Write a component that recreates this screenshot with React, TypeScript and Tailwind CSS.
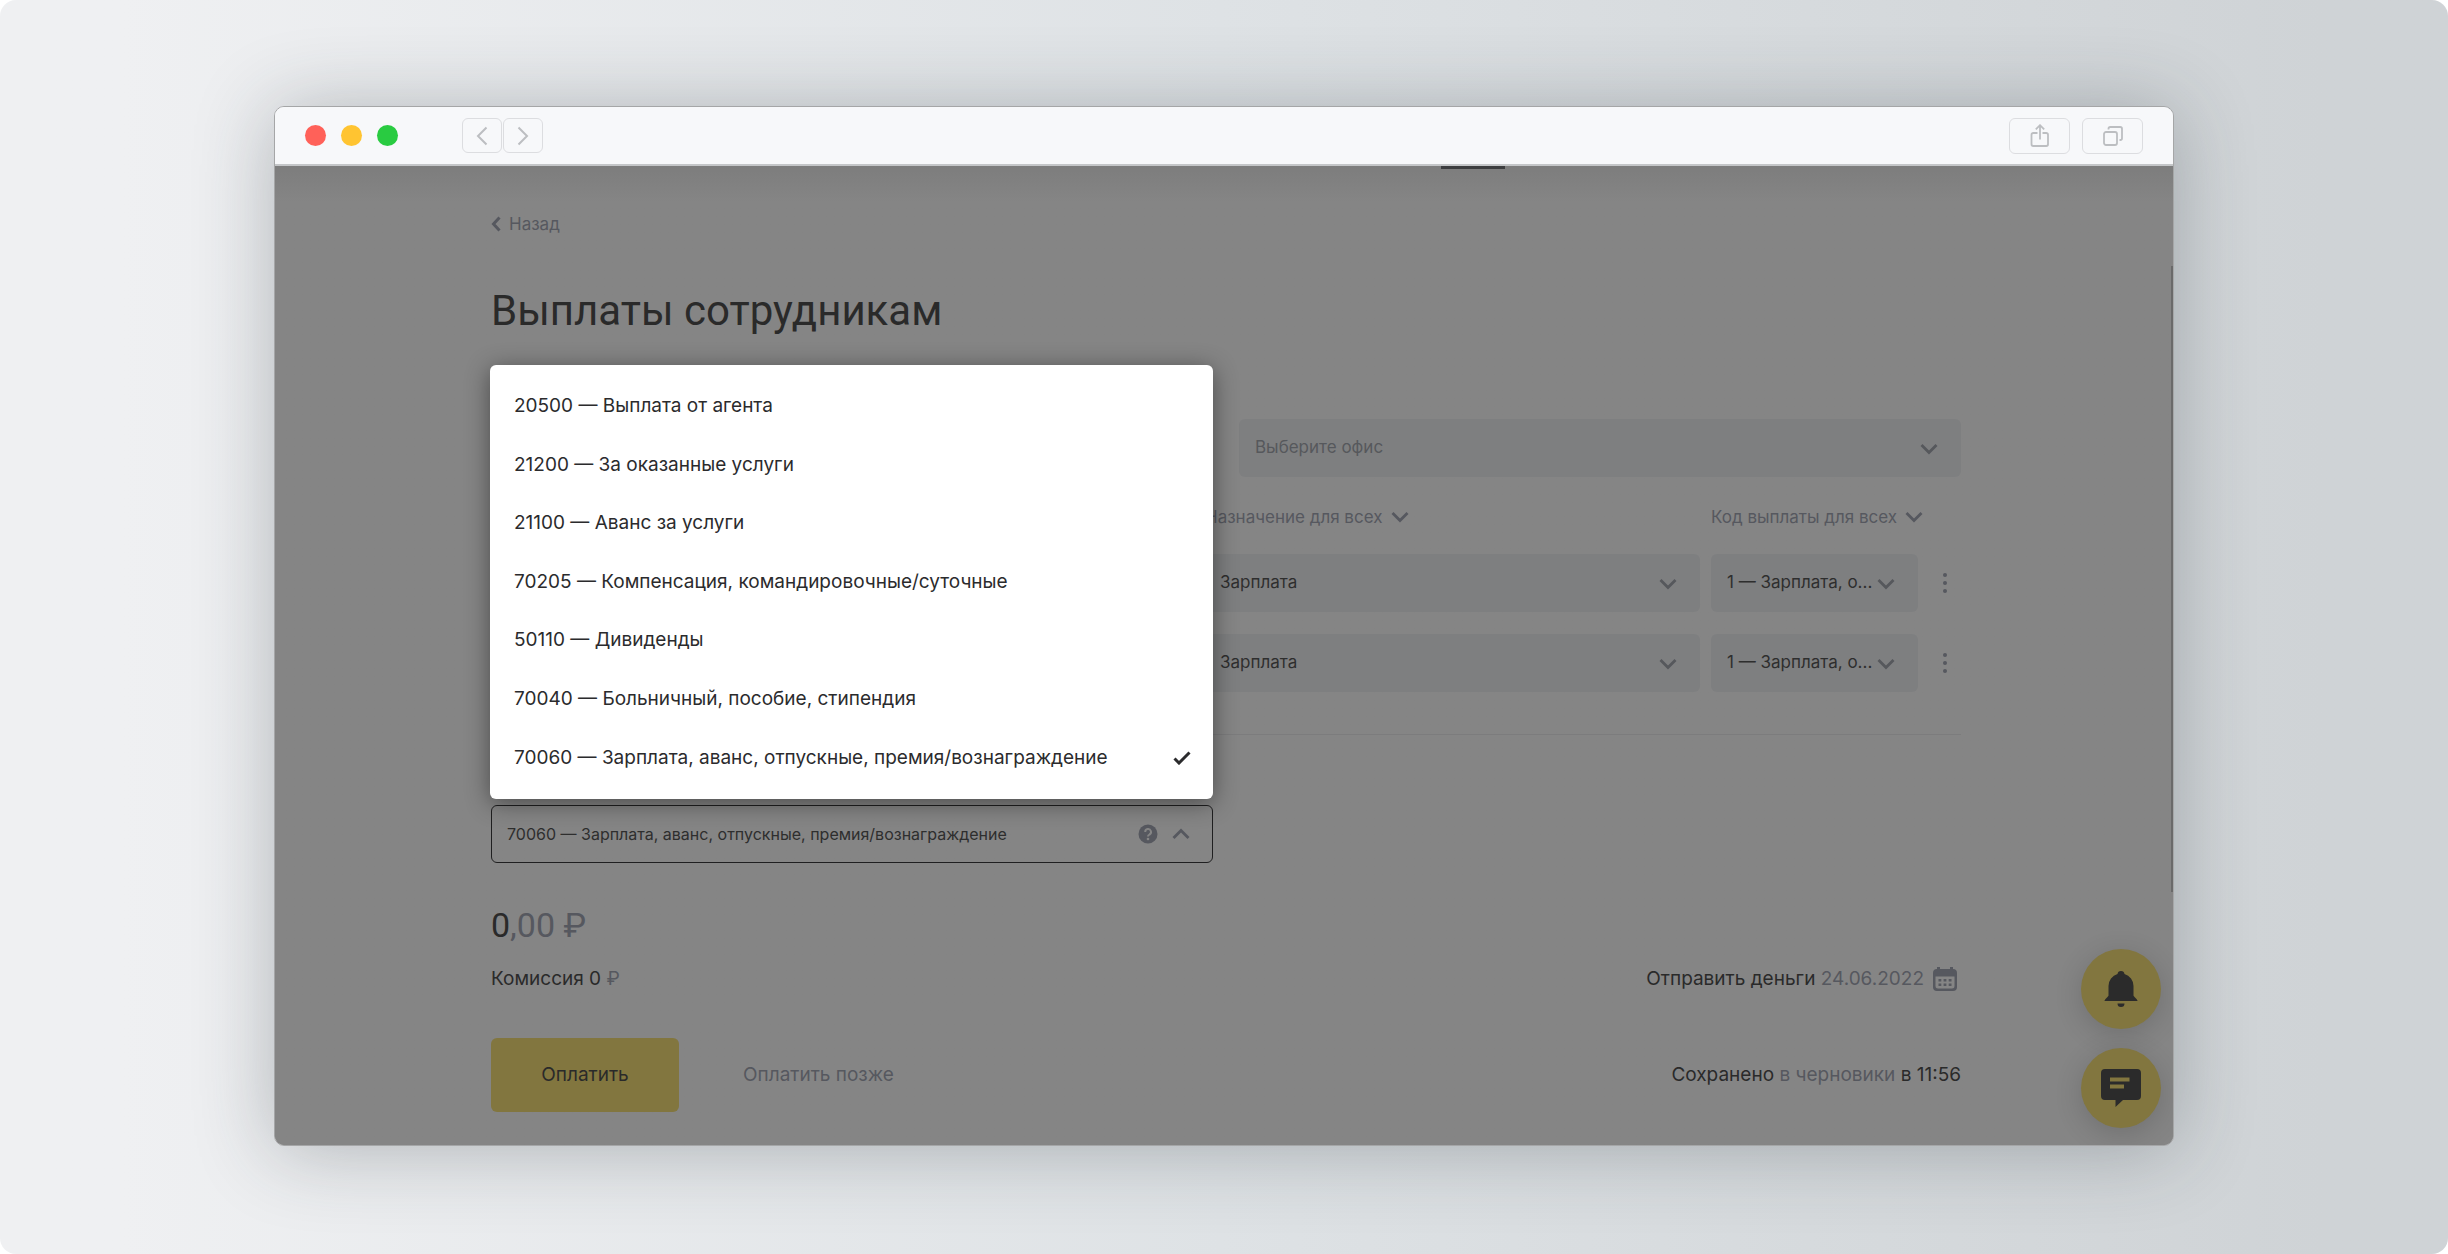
import { useState } from "react";
import type { ReactNode } from "react";
import clsx from "clsx";

const CODES = [
  "20500 — Выплата от агента",
  "21200 — За оказанные услуги",
  "21100 — Аванс за услуги",
  "70205 — Компенсация, командировочные/суточные",
  "50110 — Дивиденды",
  "70040 — Больничный, пособие, стипендия",
  "70060 — Зарплата, аванс, отпускные, премия/вознаграждение",
];

const ROWS = [1, 2];

function Chevron({ className }: { className?: string }) {
  return (
    <svg viewBox="0 0 18 18" className={clsx("size-[18px]", className)} fill="none" stroke="currentColor" strokeWidth="2.8">
      <path d="M1.5 5 9 12.5 16.5 5" />
    </svg>
  );
}

function Field({
  label,
  placeholder,
  value,
  className,
}: {
  label: string;
  placeholder?: boolean;
  value: string;
  className?: string;
}) {
  return (
    <div className={clsx("relative min-w-0", className)}>
      <select
        aria-label={label}
        className={clsx(
          "h-[58px] w-full appearance-none rounded-md bg-[#7e7f80] px-4 text-[17px]",
          placeholder ? "text-[#56585c]" : "text-[#2e2e2e]"
        )}
      >
        <option>{value}</option>
      </select>
      <Chevron className="pointer-events-none absolute right-[23px] top-[21px] text-[#56585c]" />
    </div>
  );
}

function ToolButton({ label, className, children }: { label: string; className: string; children: ReactNode }) {
  return (
    <button
      aria-label={label}
      className={clsx("flex items-center justify-center rounded-md border border-[#dcdde0] text-[#bcbec1]", className)}
    >
      {children}
    </button>
  );
}

function TitleBar() {
  return (
    <header className="flex h-[59px] items-center border-b-2 border-[#c4c6c8] bg-[#f7f8fa] px-[30px]">
      <div className="flex gap-[15px]">
        <span className="size-[21px] rounded-full bg-[#ff6159]" />
        <span className="size-[21px] rounded-full bg-[#ffc431]" />
        <span className="size-[21px] rounded-full bg-[#29cb41]" />
      </div>
      <div className="ml-16 flex gap-px">
        <ToolButton label="Назад" className="h-[35px] w-10">
          <svg viewBox="0 0 12 20" className="h-5 w-3" fill="none" stroke="currentColor" strokeWidth="2">
            <path d="M10.5 1.5 2 10l8.500 8.500" />
          </svg>
        </ToolButton>
        <ToolButton label="Вперёд" className="h-[35px] w-10">
          <svg viewBox="0 0 12 20" className="h-5 w-3" fill="none" stroke="currentColor" strokeWidth="2">
            <path d="M1.500 1.500 10 10l-8.500 8.500" />
          </svg>
        </ToolButton>
      </div>
      <div className="ml-auto flex gap-3">
        <ToolButton label="Поделиться" className="h-9 w-[61px]">
          <svg viewBox="0 0 20 24" className="h-6 w-5" fill="none" stroke="currentColor" strokeWidth="1.8">
            <path d="M7.500 9H3.200A1.700 1.700 0 0 0 1.500 10.700v9.600A1.700 1.700 0 0 0 3.200 22h13.100a1.700 1.700 0 0 0 1.700-1.700v-9.600A1.700 1.700 0 0 0 16.300 9H12.500" />
            <path d="M10 15.500V1.500M5.800 5.300 10 1.200l4.200 4.100" />
          </svg>
        </ToolButton>
        <ToolButton label="Вкладки" className="h-9 w-[61px]">
          <svg viewBox="0 0 20 20" className="size-5" fill="none" stroke="currentColor" strokeWidth="1.8">
            <rect x="1" y="6" width="13" height="13" rx="2" />
            <path d="M5.500 3.500V2.800A1.800 1.800 0 0 1 7.300 1h9.900A1.800 1.800 0 0 1 19 2.800v9.400a1.800 1.800 0 0 1-1.800 1.800h-.7" />
          </svg>
        </ToolButton>
      </div>
    </header>
  );
}

function CodeSelect() {
  const [code, setCode] = useState(CODES[6]);
  return (
    <div className="relative mt-[70px] w-[722px] max-w-full">
      <select
        aria-label="Код дохода"
        value={code}
        onChange={(e) => setCode(e.target.value)}
        className="h-[58px] w-full appearance-none rounded-md border border-[#1f1f20] px-[15px] text-[16px] text-[#2e2e2e]"
      >
        {CODES.map((c) => (
          <option key={c}>{c}</option>
        ))}
      </select>
      <div className="pointer-events-none absolute right-[23px] top-[19px] flex items-center gap-3.5 text-[#56585f]">
        <svg viewBox="0 0 20 20" className="size-5">
          <circle cx="10" cy="10" r="9.500" fill="currentColor" />
          <path d="M7.200 8a2.900 2.900 0 1 1 4.300 2.500c-1 .6-1.500 1-1.500 2" fill="none" stroke="#858585" strokeWidth="2" />
          <circle cx="10" cy="15" r="1.300" fill="#858585" />
        </svg>
        <Chevron className="rotate-180" />
      </div>
      {/* Open list */}
      <ul className="absolute bottom-full -left-px right-0 mb-1.5 flex h-[434px] flex-col rounded-md bg-white py-3 shadow-[0_4px_24px_rgba(0,0,0,0.45)]">
        {CODES.map((c) => (
          <li key={c} className="flex flex-1">
            <button
              onClick={() => setCode(c)}
              className="flex flex-1 items-center justify-between pl-6 pr-[22px] text-left text-[19px] text-[#2b2b2d]"
            >
              {c}
              {c === code && (
                <svg viewBox="0 0 18 14" className="h-3.5 w-[18px]" fill="none" stroke="currentColor" strokeWidth="3">
                  <path d="M1.500 7.500 6 12 16.500 1.500" />
                </svg>
              )}
            </button>
          </li>
        ))}
      </ul>
    </div>
  );
}

function FloatingButtons() {
  const base = "flex size-20 items-center justify-center rounded-full bg-[#82763f] text-[#2b2b2b] shadow-[0_6px_28px_rgba(0,0,0,0.16)]";
  return (
    <div className="absolute bottom-[17px] right-3 flex flex-col gap-[19px]">
      <button aria-label="Уведомления" className={base}>
        <svg viewBox="0 0 34 36" className="h-9 w-[34px]" fill="currentColor">
          <path d="M17 0a3.500 3.500 0 0 0-3.500 3A12.500 12.500 0 0 0 4.500 15v9.500c0 1-4 3.500-4 5.500h33c0-2-4-4.500-4-5.500V15a12.500 12.500 0 0 0-9-12A3.500 3.500 0 0 0 17 0ZM13.500 32.500h7a3.500 3.500 0 0 1-7 0Z" />
        </svg>
      </button>
      <button aria-label="Чат" className={base}>
        <svg viewBox="0 0 40 38" className="h-[38px] w-10">
          <path d="M4 0h32a4 4 0 0 1 4 4v23a4 4 0 0 1-4 4H22l-7.500 7V31H4a4 4 0 0 1-4-4V4a4 4 0 0 1 4-4Z" fill="currentColor" />
          <path d="M9 10.500h19.500M9 17.500h14" stroke="#82763f" strokeWidth="4" />
        </svg>
      </button>
    </div>
  );
}

export default function App() {
  return (
    <div className="bg-white">
      <div className="flex min-h-screen items-start justify-center rounded-2xl bg-linear-to-r from-[#eff0f2] from-5% via-[#dee2e5] to-[#cfd3d6] to-95% px-10 py-[106px] font-['Inter','Liberation_Sans',sans-serif]">
        <div className="relative w-full max-w-[1900px] overflow-hidden rounded-[10px] border border-[#a5a6a7] shadow-[0_4px_80px_rgba(40,50,55,0.3)]">
          <TitleBar />
          <main className="relative bg-[#858585] bg-linear-to-b from-[#7d7d7d] to-[#858585] to-[36px] pb-[33px] pl-1 pt-[46px]">
            <div className="absolute left-[1166px] top-0 h-[3px] w-16 bg-[#3c3d3f]" />
            <div className="absolute right-0 top-[100px] h-[626px] w-0.5 bg-[#6a6a6a]" />

            <div className="mx-auto max-w-[1470px]">
              <a href="#" className="flex w-fit items-center gap-2 text-[17px] leading-6 text-[#56585f]">
                <svg viewBox="0 0 10 16" className="h-4 w-2.5" fill="none" stroke="currentColor" strokeWidth="3">
                  <path d="M8.500 1.500 2.500 8l6 6.500" />
                </svg>
                Назад
              </a>
              <h1 className="mt-[50px] font-['Roboto',sans-serif] text-[42px] leading-[50px] text-[#2a2a2a]">
                Выплаты сотрудникам
              </h1>

              <div className="mt-[83px] grid grid-cols-2 gap-[26px]">
                <Field label="Счёт списания" value="" />
                <Field label="Офис" value="Выберите офис" placeholder />
              </div>

              {/* Payments table */}
              <div className="mt-7 flex text-[17px] leading-6 text-[#56585f]">
                <div className="flex-1" />
                <button className="flex w-[506px] items-center gap-2">
                  Назначение для всех
                  <Chevron className="size-4" />
                </button>
                <button className="flex w-[250px] items-center gap-2">
                  Код выплаты для всех
                  <Chevron className="size-4" />
                </button>
              </div>
              <div className="mt-[25px] flex flex-col gap-[22px]">
                {ROWS.map((row) => (
                  <div key={row} className="flex items-center gap-[11px]">
                    <div className="flex-1" />
                    <Field label="Назначение" value="Зарплата" className="w-[496px]" />
                    <Field label="Код выплаты" value="1 — Зарплата, о..." className="w-[207px]" />
                    <button aria-label="Ещё" className="flex w-8 justify-center text-[#56585f]">
                      <svg viewBox="0 0 6 22" className="h-[22px] w-1.5" fill="currentColor">
                        <circle cx="3" cy="3" r="2" />
                        <circle cx="3" cy="11" r="2" />
                        <circle cx="3" cy="19" r="2" />
                      </svg>
                    </button>
                  </div>
                ))}
              </div>
              <hr className="mt-[42px] border-[#7c7c7d]" />

              <CodeSelect />

              {/* Totals */}
              <div className="mt-[39px] font-['Roboto',sans-serif] text-[34px] leading-[46px] text-[#56585f]">
                <span className="text-[#2a2a2a]">0</span>,00 ₽
              </div>
              <div className="mt-[17px] flex items-center justify-between text-[19px] leading-7 text-[#2a2a2a]">
                <p>
                  Комиссия 0 <span className="text-[#56585f]">₽</span>
                </p>
                <p className="flex items-center gap-[9px] pr-1">
                  <span>
                    Отправить деньги <span className="text-[#56585f]">24.06.2022</span>
                  </span>
                  <svg viewBox="0 0 24 24" className="size-6 text-[#56585f]">
                    <path d="M4 0h3v2h10V0h3v2a4 4 0 0 1 4 4v14a4 4 0 0 1-4 4H4a4 4 0 0 1-4-4V6a4 4 0 0 1 4-4Z" fill="currentColor" />
                    <path d="M2.500 9.500h19V19a2.500 2.500 0 0 1-2.500 2.500H5A2.500 2.500 0 0 1 2.500 19Z" fill="#858585" />
                    <path d="M5.500 13.200h13M5.500 17.700h13" stroke="currentColor" strokeWidth="2.600" strokeDasharray="2.800 2.300" />
                  </svg>
                </p>
              </div>
              <div className="mt-[45px] flex items-center text-[19px] leading-7">
                <button className="h-[74px] w-[188px] rounded-md bg-[#82763f] text-[#2a2a2a]">Оплатить</button>
                <button className="ml-16 text-[#56585f]">Оплатить позже</button>
                <p className="ml-auto text-[#2a2a2a]">
                  Сохранено{" "}
                  <a href="#" className="text-[#56585f]">
                    в черновики
                  </a>{" "}
                  в 11:56
                </p>
              </div>
            </div>
            <FloatingButtons />
          </main>
        </div>
      </div>
    </div>
  );
}
